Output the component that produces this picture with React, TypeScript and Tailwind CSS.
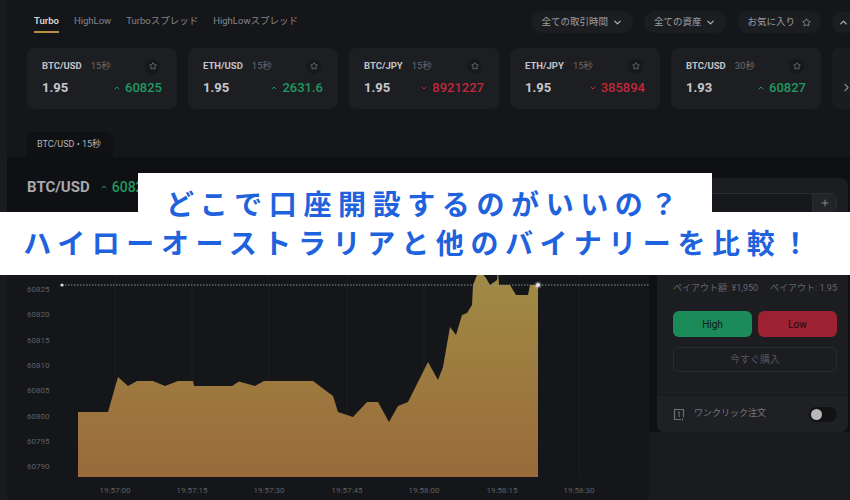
import { Star, ChevronDown, ChevronUp, ChevronRight, Plus } from 'lucide-react'

const cards = [
  { pair: 'BTC/USD', time: '15秒', payout: '1.95', price: '60825', up: true },
  { pair: 'ETH/USD', time: '15秒', payout: '1.95', price: '2631.6', up: true },
  { pair: 'BTC/JPY', time: '15秒', payout: '1.95', price: '8921227', up: false },
  { pair: 'ETH/JPY', time: '15秒', payout: '1.95', price: '385894', up: false },
  { pair: 'BTC/USD', time: '30秒', payout: '1.93', price: '60827', up: true },
]

const yLabels = ['60825', '60820', '60815', '60810', '60805', '60800', '60795', '60790']
const xLabels = ['19:57:00', '19:57:15', '19:57:30', '19:57:45', '19:58:00', '19:58:15', '19:58:30']
const xTicks = [115, 192, 269, 347, 424, 502, 579]

// price area, page coordinates
const area =
  'M78,477 L78,412 L108,412 L118,377 L128,386 L137,381 L153,381 L165,386 L178,381 L193,381 L194,386 L232,386 L239,381.5 L255,386 L264,381 L313,381 L333,396 L338,412 L353,417 L367,402 L378,402 L389,422 L398,406 L408,402 L428,362 L438,380 L443,367 L450,327 L456,335 L462,315 L467,313 L472,305 L473,285 L479,270 L486,278 L490,285 L497,280 L498,268 L499,285 L510,285 L516,295 L528,295 L530,285 L538,285 L538,477 Z'

function TickerCard({ pair, time, payout, price, up }: (typeof cards)[number]) {
  return (
    <div className="w-[150px] h-[61px] shrink-0 rounded-lg bg-[#1d1e22] pl-[15px] pr-[15px] pt-[10px]">
      <div className="flex items-center h-[16px]">
        <span className="text-[9.5px] font-bold text-[#c3c4c8]">{pair}</span>
        <span className="ml-[9px] text-[9.5px] text-[#68696e]">{time}</span>
        <span className="ml-auto mr-[2px] w-[15px] h-[15px] rounded-full bg-[#17181b] flex items-center justify-center">
          <Star size={8} strokeWidth={2} className="text-[#8b8c91]" />
        </span>
      </div>
      <div className="flex items-center h-[16px] mt-[6px]">
        <span className="text-[13px] font-bold text-[#c8c9cd]">{payout}</span>
        <span className={`ml-auto flex items-center gap-[4px] text-[13px] font-medium ${up ? 'text-[#1d9a60]' : 'text-[#c0283c]'}`}>
          {up ? <ChevronUp size={8} strokeWidth={3} /> : <ChevronDown size={8} strokeWidth={3} />}
          {price}
        </span>
      </div>
    </div>
  )
}

function Pill({ label, icon }: { label: string; icon: 'down' | 'star' }) {
  return (
    <div className="h-[22px] rounded-full bg-[#1c1d21] px-[10px] flex items-center gap-[4px] text-[9.5px] text-[#9d9ea3]">
      <span>{label}</span>
      {icon === 'down' ? (
        <ChevronDown size={11} strokeWidth={2.6} className="text-[#b4b5b9]" />
      ) : (
        <Star size={9} strokeWidth={2} className="ml-[3px] text-[#9d9ea3]" />
      )}
    </div>
  )
}

export default function App() {
  return (
    <div className="relative w-[850px] h-[500px] overflow-hidden flex bg-[#0f1013] font-[Roboto,'Noto_Sans_CJK_JP',sans-serif]">
      {/* left edge strip */}
      <div className="w-[7px] shrink-0 bg-[#1a1b1e]" />

      <div className="flex-1 flex flex-col min-w-0">
        {/* Top section */}
        <div className="bg-[#151619]">
          <div className="flex items-start pl-[27px]">
            <div className="flex gap-[15px] text-[9.5px]">
              <div className="pt-[14px] pb-[3px] leading-[14px] font-semibold text-[#d6d6d8] border-b-2 border-[#b8903f]">Turbo</div>
              <div className="pt-[14px] leading-[14px] text-[#85868b]">HighLow</div>
              <div className="pt-[14px] leading-[14px] text-[#85868b]">Turboスプレッド</div>
              <div className="pt-[14px] leading-[14px] text-[#85868b]">HighLowスプレッド</div>
            </div>
            <div className="ml-auto mr-[-4px] mt-[11px] flex gap-[11px]">
              <Pill label="全ての取引時間" icon="down" />
              <Pill label="全ての資産" icon="down" />
              <Pill label="お気に入り" icon="star" />
              <div className="w-[22px] h-[22px] rounded-full bg-[#1c1d21] flex items-center justify-center">
                <ChevronUp size={11} strokeWidth={2.6} className="text-[#b4b5b9]" />
              </div>
            </div>
          </div>

          <div className="flex gap-[11px] pl-[20px] mt-[15px]">
            {cards.map((c, i) => (
              <TickerCard key={i} {...c} />
            ))}
            <div className="w-[150px] h-[61px] shrink-0 rounded-lg bg-[#1b1c20] pl-[8px] pt-[33px]">
              <ChevronRight size={13} strokeWidth={2} className="text-[#8a8b90]" />
            </div>
          </div>

          <div className="pl-[20px] mt-[23px]">
            <div className="w-[86px] h-[25px] rounded-t-lg bg-[#101114] pl-[10px] flex items-center text-[9px] text-[#b3b4b8]">
              BTC/USD • 15秒
            </div>
          </div>
        </div>

        {/* Main area */}
        <div className="flex-1 flex min-h-0">
          <div className="flex-1 flex flex-col">
            <div className="h-[73px] pl-[20px] pt-[20px] flex items-start gap-[10px]">
              <span className="text-[15px] leading-[20px] font-bold text-[#a8a9ad]">BTC/USD</span>
              <span className="flex items-center gap-[4px] text-[14px] leading-[20px] font-medium text-[#1d9a60]">
                <ChevronUp size={8} strokeWidth={3} />
                60825
              </span>
            </div>
            <div className="flex-1 bg-[#151619]">
              <svg width="642" height="270" viewBox="7 230 642 270" className="block">
                <defs>
                  <linearGradient id="fill" x1="0" y1="270" x2="0" y2="477" gradientUnits="userSpaceOnUse">
                    <stop offset="0" stopColor="#a08b45" />
                    <stop offset="1" stopColor="#9a6a3a" />
                  </linearGradient>
                </defs>
                {xTicks.map((x) => (
                  <line key={x} x1={x} y1={230} x2={x} y2={477} stroke="#1d1e22" strokeWidth="1" />
                ))}
                <path d={area} fill="url(#fill)" />
                <line x1="62" y1="285" x2="649" y2="285" stroke="#8d8e93" strokeWidth="1" strokeDasharray="1.5 1.5" />
                <circle cx="62" cy="285" r="1.6" fill="#d8d8d8" />
                <circle cx="538" cy="285" r="3.5" fill="#ffffff" opacity="0.25" />
                <circle cx="538" cy="285" r="2" fill="#e8e8e8" />
                {yLabels.map((l, i) => (
                  <text key={l} x="27" y={292 + i * 25.3} fontSize="8" fill="#5f6065" fontFamily="Roboto, sans-serif">
                    {l}
                  </text>
                ))}
                {xLabels.map((l, i) => (
                  <text key={l} x={xTicks[i]} y="493" fontSize="8" fill="#5f6065" textAnchor="middle" fontFamily="Roboto, sans-serif">
                    {l}
                  </text>
                ))}
              </svg>
            </div>
          </div>

          {/* Right order panel */}
          <div className="w-[201px] shrink-0 flex flex-col">
            <div className="pt-[21px] pl-[8px] pr-[2px]">
              <div className="h-[254px] rounded-lg bg-[#1c1d21] pl-[16px] pr-[11px] pt-[15px] flex flex-col">
                <div className="h-[20px] -ml-[3px] flex rounded-md border border-[#2c2d32] bg-[#17181b] overflow-hidden">
                  <div className="flex-1" />
                  <div className="w-[24px] border-l border-[#2c2d32] bg-[#232428] flex items-center justify-center">
                    <Plus size={10} strokeWidth={2} className="text-[#9a9ba0]" />
                  </div>
                </div>
                <div className="mt-[70px] h-[12px] flex justify-between items-center text-[9px] text-[#66676c]">
                  <span>ペイアウト額: ¥1,950</span>
                  <span>ペイアウト: 1.95</span>
                </div>
                <div className="mt-[16px] flex gap-[6px]">
                  <div className="flex-1 h-[26px] rounded-md bg-[#1b8b59] flex items-center justify-center text-[10px] text-[#0e1813]">High</div>
                  <div className="flex-1 h-[26px] rounded-md bg-[#9c2232] flex items-center justify-center text-[10px] text-[#1a0a0d]">Low</div>
                </div>
                <div className="mt-[10px] h-[25px] rounded-md border border-[#2a2b30] flex items-center justify-center text-[10px] text-[#55565b]">
                  今すぐ購入
                </div>
                <div className="mt-[23px] -ml-[16px] -mr-[11px] flex-1 border-t border-[#17181b] bg-[#1f2024] rounded-b-lg pl-[16px] pr-[11px] flex items-center">
                  <svg width="12" height="13" viewBox="0 0 12 13" className="shrink-0">
                    <path d="M8 11.5H1.5V1.5H10.5V9" fill="none" stroke="#6e6f74" strokeWidth="1.2" />
                    <path d="M5 4.5L6.2 3.8V9" fill="none" stroke="#6e6f74" strokeWidth="1" />
                    <path d="M9.5 10.5V12.5" stroke="#6e6f74" strokeWidth="1.2" />
                  </svg>
                  <span className="ml-[9px] text-[9px] text-[#75767b]">ワンクリック注文</span>
                  <div className="ml-auto w-[28px] h-[15px] rounded-full bg-[#111214] flex items-center pl-[2px]">
                    <div className="w-[11px] h-[11px] rounded-full bg-[#b8b8b8]" />
                  </div>
                </div>
              </div>
            </div>
            <div className="flex-1 bg-[#1a1b1f]" />
          </div>
        </div>
      </div>

      {/* Article banner over the screenshot */}
      <div className="absolute left-0 top-[173px] w-full flex flex-col items-center font-['Noto_Sans_CJK_JP',sans-serif] font-bold text-[28px] leading-[28px] tracking-[6.6px] text-[#1f62dd]">
        <div className="relative z-10 w-[574px] h-[39px] bg-white pt-[16px] text-center whitespace-nowrap">
          どこで口座開設するのがいいの？
        </div>
        <div className="w-full h-[63px] bg-white pt-[16px] pr-[11px] text-center whitespace-nowrap">
          ハイローオーストラリアと他のバイナリーを比較！
        </div>
      </div>
    </div>
  )
}
